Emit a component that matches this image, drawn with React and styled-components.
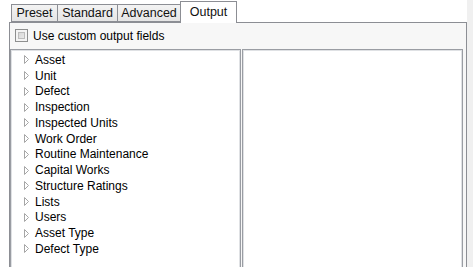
import React from 'react';
import styled, { createGlobalStyle } from 'styled-components';

const GlobalStyle = createGlobalStyle`
  html, body {
    margin: 0;
    padding: 0;
    background: #ffffff;
  }
  body {
    font-family: "Segoe UI", "Liberation Sans", Arial, sans-serif;
    font-size: 12px;
    color: #000;
  }
`;

const tabs = [
    { label: 'Preset', width: 47 },
    { label: 'Standard', width: 61 },
    { label: 'Advanced', width: 64 },
    { label: 'Output', width: 57, selected: true },
];

const nodes = [
    'Asset', 'Unit', 'Defect', 'Inspection', 'Inspected Units', 'Work Order',
    'Routine Maintenance', 'Capital Works', 'Structure Ratings', 'Lists',
    'Users', 'Asset Type', 'Defect Type',
];

const App = () => {
    return (
        <>
            <GlobalStyle />
            <Page>
                <Main>
                    <TabStrip>
                        {tabs.map((tab) => (
                            <Tab key={tab.label} $width={tab.width} $selected={tab.selected}>
                                {tab.label}
                            </Tab>
                        ))}
                    </TabStrip>
                    <Panel>
                        <CheckRow>
                            <CheckBox />
                            <span>Use custom output fields</span>
                        </CheckRow>
                        <Lists>
                            <Box $width={231}>
                                <Tree>
                                    {nodes.map((node) => (
                                        <TreeItem key={node}>
                                            <Expander width="6" height="9" viewBox="0 0 6 9">
                                                <path d="M0.5 0.5 L4.5 4.5 L0.5 8.5 Z" fill="none" stroke="#a6a6a6" />
                                            </Expander>
                                            {node}
                                        </TreeItem>
                                    ))}
                                </Tree>
                            </Box>
                            <Box $width={221} />
                        </Lists>
                    </Panel>
                </Main>
                <Strip />
            </Page>
        </>
    );
};

const Page = styled.div`
display: flex;
height: 267px;
overflow: hidden;
`;

const Main = styled.div`
width: 458px;
padding-left: 9px;
display: flex;
flex-direction: column;
`;

const Strip = styled.div`
width: 6px;
background: #f0f0f0;
`;

const TabStrip = styled.div`
display: flex;
align-items: flex-end;
height: 22px;
padding-left: 2px;
position: relative;
z-index: 1;
`;

const Tab = styled.div`
box-sizing: border-box;
width: ${(p) => p.$width}px;
height: ${(p) => (p.$selected ? 22 : 18)}px;
margin-left: -1px;
margin-bottom: ${(p) => (p.$selected ? -1 : 0)}px;
border: 1px solid #8c8e94;
border-bottom: ${(p) => (p.$selected ? 'none' : '1px solid #8c8e94')};
background: ${(p) => (p.$selected ? '#ffffff' : 'linear-gradient(#f3f3f3, #e5e5e5)')};
display: flex;
align-items: center;
justify-content: center;
padding-bottom: ${(p) => (p.$selected ? 2 : 0)}px;
color: #111;
font-size: 12.5px;
&:first-child {
    margin-left: 0;
}
`;

const Panel = styled.div`
flex: 1;
border: 1px solid #8c8e94;
border-bottom: none;
background: #f7f7f7;
display: flex;
flex-direction: column;
`;

const CheckRow = styled.div`
display: flex;
align-items: center;
gap: 5px;
height: 13px;
margin: 6px 0 0 5px;
`;

const CheckBox = styled.span`
box-sizing: border-box;
width: 13px;
height: 13px;
border: 1px solid #8e8f8f;
background: linear-gradient(135deg, #cfcfcf, #f2f2f2);
box-shadow: inset 0 0 0 2px #f4f4f4, inset 0 0 0 3px #bdbdbd;
`;

const Lists = styled.div`
flex: 1;
display: flex;
gap: 1px;
margin-top: 7px;
`;

const Box = styled.div`
box-sizing: border-box;
width: ${(p) => p.$width}px;
border: 1px solid #9a9da3;
border-bottom: none;
background: #ffffff;
box-shadow: inset 1px 1px 0 #dfe1e4, inset -1px 0 0 #dfe1e4;
`;

const Tree = styled.div`
padding: 2px 0 0 13px;
`;

const TreeItem = styled.div`
display: flex;
align-items: center;
height: 15.75px;
`;

const Expander = styled.svg`
margin-right: 5px;
`;

export default App;
